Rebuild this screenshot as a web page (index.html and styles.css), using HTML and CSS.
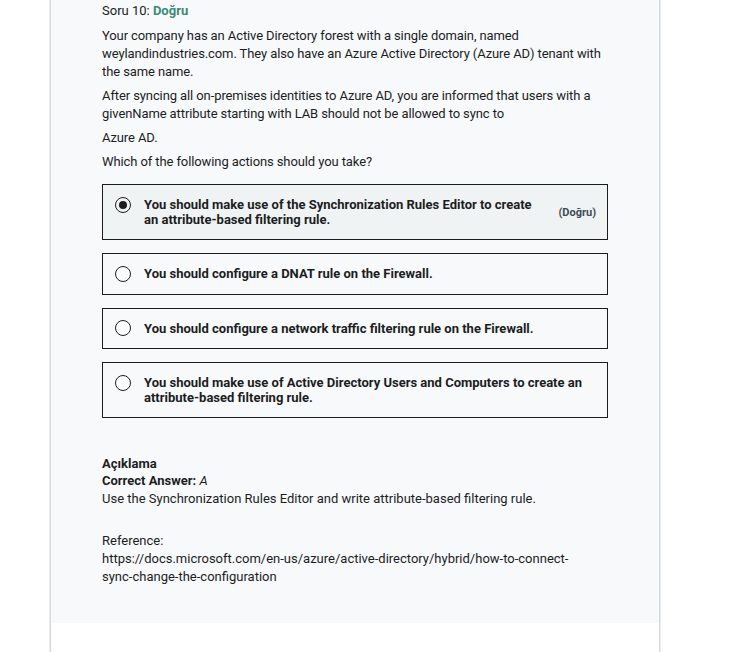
FILE: index.html
```html
<!DOCTYPE html>
<html>
<head>
<meta charset="utf-8">
<link rel="stylesheet" href="styles.css">
</head>
<body>
<div class="panel">
  <section class="question">
    <div class="title">Soru 10: <span class="ok">Doğru</span></div>
    <p class="text">Your company has an Active Directory forest with a single domain, named weylandindustries.com. They also have an Azure Active Directory (Azure AD) tenant with the same name.</p>
    <p class="text">After syncing all on-premises identities to Azure AD, you are informed that users with a givenName attribute starting with LAB should not be allowed to sync to</p>
    <p class="text">Azure AD.</p>
    <p class="text">Which of the following actions should you take?</p>

    <ul class="options">
      <li class="option selected">
        <span class="radio checked"></span>
        <span class="label">You should make use of the Synchronization Rules Editor to create an attribute-based filtering rule.</span>
        <span class="tag">(Doğru)</span>
      </li>
      <li class="option">
        <span class="radio"></span>
        <span class="label">You should configure a DNAT rule on the Firewall.</span>
      </li>
      <li class="option">
        <span class="radio"></span>
        <span class="label">You should configure a network traffic filtering rule on the Firewall.</span>
      </li>
      <li class="option">
        <span class="radio"></span>
        <span class="label">You should make use of Active Directory Users and Computers to create an attribute-based filtering rule.</span>
      </li>
    </ul>

    <div class="explain">
      <div class="ex-head">Açıklama</div>
      <div class="ex-line"><strong>Correct Answer:</strong> <em>A</em></div>
      <p class="ex-para">Use the Synchronization Rules Editor and write attribute-based filtering rule.</p>
      <div class="ex-line">Reference:</div>
      <div class="ex-line url">https://docs.microsoft.com/en-us/azure/active-directory/hybrid/how-to-connect-sync-change-the-configuration</div>
    </div>
  </section>
  <div class="blank"></div>
</div>
</body>
</html>
```

FILE: styles.css
```css
html, body {
  margin: 0;
  padding: 0;
  background: #ffffff;
}
body {
  font-family: Roboto, "Liberation Sans", sans-serif;
  font-size: 13px;
  color: #1c1d1f;
}
.panel {
  margin-left: 50px;
  width: 608px;
  border-left: 1px solid #d6d9dc;
  border-right: 1px solid #d6d9dc;
  box-shadow: -1px 0 0 #eceef0, 1px 0 0 #eceef0;
  min-height: 652px;
}
.question {
  background: #f7f9fa;
  padding: 2px 51px 37px 51px;
}
.title {
  line-height: 18px;
  margin-bottom: 7px;
}
.ok {
  color: #3b8b79;
  font-weight: 700;
}
.text {
  margin: 0 0 6px 0;
  line-height: 18px;
  letter-spacing: -0.1px;
}
.options {
  list-style: none;
  margin: 13px 0 0 0;
  padding: 0;
  display: flex;
  flex-direction: column;
  gap: 13px;
}
.option {
  display: flex;
  align-items: flex-start;
  border: 1px solid #1c1d1f;
  padding: 12px 11px 12px 12px;
  font-weight: 700;
  line-height: 15px;
  font-size: 13px;
}
.option.selected {
  background: #f0f3f3;
}
.radio {
  flex: none;
  width: 14px;
  height: 14px;
  border: 1px solid #1c1d1f;
  border-radius: 50%;
  margin-right: 13px;
  margin-top: -0.5px;
  position: relative;
  background: #fff;
}
.option.selected .radio { background: transparent; }
.radio.checked::after {
  content: "";
  position: absolute;
  left: 3px;
  top: 3px;
  width: 8px;
  height: 8px;
  border-radius: 50%;
  background: #1c1d1f;
}
.label {
  flex: 1;
  padding-right: 10px;
}
.tag {
  flex: none;
  align-self: center;
  font-size: 11px;
  font-weight: 700;
  color: #3e4b57;
  margin-left: 10px;
}
.explain {
  margin-top: 38px;
}
.ex-head {
  font-weight: 700;
  line-height: 16px;
}
.ex-line {
  line-height: 18px;
}
.ex-line strong { font-weight: 700; }
.url {
  max-width: 480px;
}
.ex-para {
  margin: 0 0 24px 0;
  line-height: 18px;
}
.blank {
  height: 40px;
}
```
